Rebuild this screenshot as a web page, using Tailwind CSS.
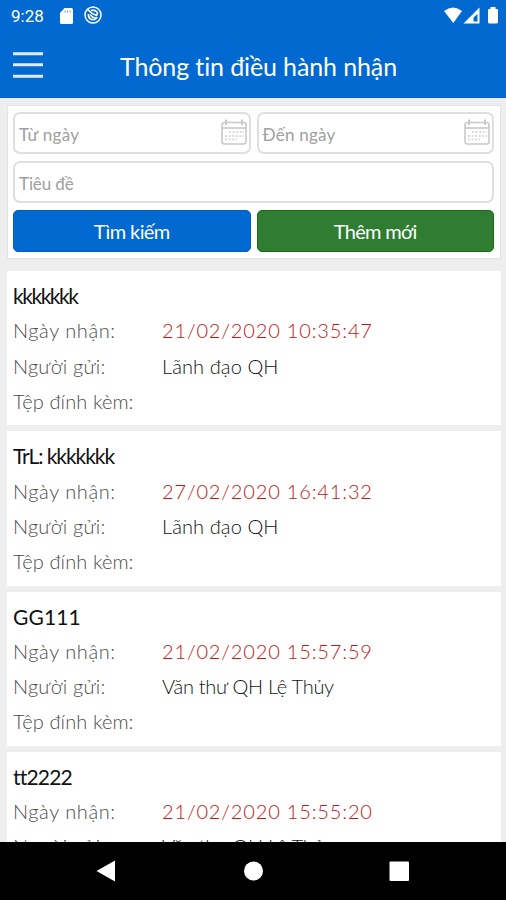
<!DOCTYPE html>
<html lang="vi">
<head>
<meta charset="utf-8">
<title>Thông tin điều hành nhận</title>
<script src="https://cdn.jsdelivr.net/npm/@tailwindcss/browser@4"></script>
</head>
<body class="w-[506px] h-[900px] overflow-hidden flex flex-col bg-[#eeeeee] font-['Lato',sans-serif]">
<svg class="hidden">
  <symbol id="calendar" viewBox="0 0 26 26">
    <g fill="none" stroke="#c9c9c9" stroke-width="1.6">
      <rect x="1" y="3.5" width="24" height="21.5" rx="2.5"/>
      <path d="M1 9H25"/>
      <path d="M5 .5V6M21 .5V6" stroke-width="2"/>
      <path d="M8 13H23M4 17H23M4 20.5H16" stroke-width="2" stroke-dasharray="2 1.6" stroke="#dadada"/>
    </g>
  </symbol>
</svg>

<header class="h-[98px] shrink-0 bg-[#0269d0] border-b border-[#1757bd] text-white flex flex-col">
  <div class="h-8 flex items-center pl-[11px] pr-[8px]">
    <span class="font-['Roboto'] text-[17px] leading-8 w-[49px]">9:28</span>
    <svg class="w-[13px] h-4" viewBox="0 0 13 16"><path d="M4.500 0H11.500Q13 0 13 1.500V14.500Q13 16 11.500 16H1.500Q0 16 0 14.500V5Z" fill="#fff"/><path d="M5 2.500V4.500M7.500 2.500V4.500M10 2.500V4.500" stroke="#5b9de2"/></svg>
    <svg class="w-[18px] h-[18px] ml-[11px] -mt-[2px]" viewBox="0 0 18 18" fill="none" stroke="#fff"><circle cx="9" cy="9" r="8" stroke-width="1.500"/><path d="M3.500 3.500Q8 8 12.500 9.500Q14 8 13 6Q10.500 3.500 7 4.500M4.500 8Q4 12 7.500 13.500Q11 14 12.500 12Q8 12 6.500 8.500" stroke-width="1.700"/></svg>
    <svg class="w-[54px] h-[17px] ml-auto -mt-[2px]" viewBox="0 0 54 17" fill="#fff"><path d="M0 4Q9 -3 18 4L9.300 16Z"/><path d="M35.500 .5V16.500H19.500ZM33.500 7V14.500H29.500V10.500Z" fill-rule="evenodd"/><path d="M46.500 0H51.500V2H53Q54 2 54 3V15Q54 16.500 52.500 16.500H45.500Q44 16.500 44 15V3Q44 2 45 2H46.500Z"/></svg>
  </div>
  <div class="flex-1 flex items-center pl-[13px]">
    <svg class="w-[30px] h-[26px]" viewBox="0 0 30 26"><path d="M0 1.700H30M0 12.800H30M0 24.300H30" stroke="#e0ecfc" stroke-width="3"/></svg>
    <h1 class="ml-[77px] text-[25px] leading-[34px] whitespace-nowrap tracking-[-0.12px] pt-[2px]">Thông tin điều hành nhận</h1>
  </div>
</header>

<main class="flex-1 min-h-0 overflow-hidden pl-[6.500px] pt-[7px]">
  <section class="h-[154px] w-[494px] bg-white border border-[#e4e4e4] px-[5.500px] pt-[6px] grid grid-cols-2 gap-x-[6px] gap-y-[7px] content-start text-[17px] text-[#a0a0a0]">
    <div class="h-[42px] rounded-[7px] border-2 border-[#dfdfdf] pl-[4px] pr-[2px] flex items-center justify-between"><span class="pt-[3px] tracking-[0.3px]">Từ ngày</span><svg class="w-[26px] h-[26px] -mt-[2px]"><use href="#calendar"/></svg></div>
    <div class="h-[42px] rounded-[7px] border-2 border-[#dfdfdf] pl-[4px] pr-[2px] flex items-center justify-between"><span class="pt-[3px] tracking-[0.25px]">Đến ngày</span><svg class="w-[26px] h-[26px] -mt-[2px]"><use href="#calendar"/></svg></div>
    <div class="col-span-2 h-[42px] rounded-[7px] border-2 border-[#dfdfdf] pl-[4px] flex items-center"><span class="pt-[3px] tracking-[-0.1px]">Tiêu đề</span></div>
    <button class="h-[42px] rounded-[5px] bg-[#0269d0] border border-[#005cc9] text-white text-[20px] tracking-[-0.6px] leading-[40px]">Tìm kiếm</button>
    <button class="h-[42px] rounded-[5px] bg-[#2e7d32] border border-[#14700f] text-white text-[20px] tracking-[-0.7px] leading-[40px]">Thêm mới</button>
  </section>

  <div id="list" class="mt-[12px] w-[494px] flex flex-col gap-[6px]"></div>
</main>

<nav class="h-[58px] shrink-0 bg-black relative z-10">
  <svg class="w-full h-full" viewBox="0 0 506 58" fill="#fff"><path d="M96.500 29L115 18.500V39.500Z"/><circle cx="253.500" cy="29" r="9.500"/><rect x="389.500" y="19.500" width="19.500" height="19.500" rx="1"/></svg>
</nav>

<template id="card">
  <article class="h-[154.3px] shrink-0 bg-white pl-[6.500px] pt-[7px] text-[20px] leading-[35.3px] whitespace-nowrap">
    <h2 class="text-[#111] text-[21px] leading-[35.3px]"></h2>
    <div class="flex font-light text-[#4c4c4c]"><span class="w-[149px] tracking-[0.57px]">Ngày nhận:</span><span class="text-[#c01818] tracking-[0.84px]" data-f="date"></span></div>
    <div class="flex font-light text-[#4c4c4c]"><span class="w-[149px] tracking-[0.2px]">Người gửi:</span><span class="text-[#111]" data-f="from"></span></div>
    <div class="flex font-light text-[#4c4c4c]" data-f="file"><span class="w-[149px] tracking-[0.1px]">Tệp đính kèm:</span></div>
  </article>
</template>
<script>
const rows = [
  ['kkkkkkk', 'tracking-[-1.45px]', '21/02/2020 10:35:47', 'Lãnh đạo QH', 'tracking-[0.1px]', true],
  ['TrL: kkkkkkk', 'tracking-[-1.05px]', '27/02/2020 16:41:32', 'Lãnh đạo QH', 'tracking-[0.1px]', true],
  ['GG111', 'tracking-[0.1px]', '21/02/2020 15:57:59', 'Văn thư QH Lệ Thủy', 'tracking-[-0.28px]', true],
  ['tt2222', 'tracking-[-0.8px]', '21/02/2020 15:55:20', 'Văn thư QH Lệ Thủy', 'tracking-[-0.28px]', false],
];
for (const [title, titleSpacing, date, from, fromSpacing, hasFile] of rows) {
  const c = document.getElementById('card').content.cloneNode(true);
  const h = c.querySelector('h2');
  h.textContent = title;
  h.classList.add(titleSpacing);
  c.querySelector('[data-f=date]').textContent = date;
  const f = c.querySelector('[data-f=from]');
  f.textContent = from;
  f.classList.add(fromSpacing);
  if (!hasFile) c.querySelector('[data-f=file]').remove();
  document.getElementById('list').append(c);
}
</script>
</body>
</html>
